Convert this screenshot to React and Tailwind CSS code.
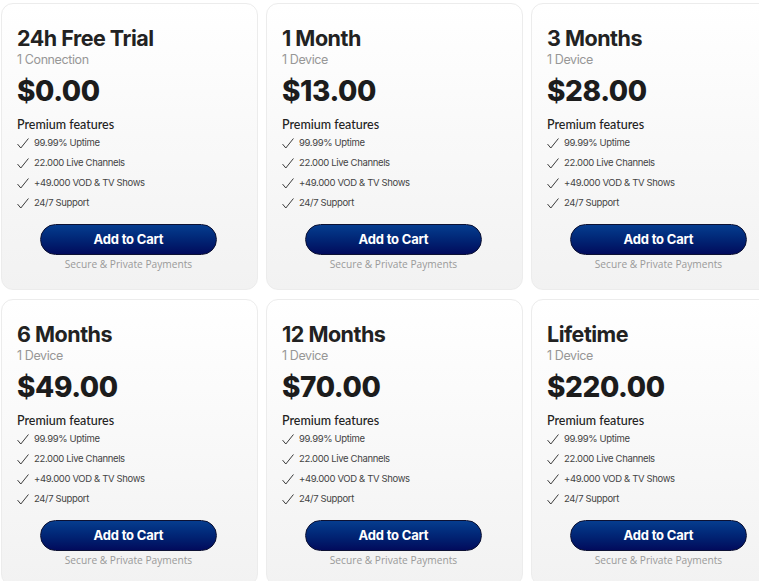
import React from "react";

const plans = [
  { title: "24h Free Trial", sub: "1 Connection", price: "$0.00" },
  { title: "1 Month", sub: "1 Device", price: "$13.00" },
  { title: "3 Months", sub: "1 Device", price: "$28.00" },
  { title: "6 Months", sub: "1 Device", price: "$49.00" },
  { title: "12 Months", sub: "1 Device", price: "$70.00" },
  { title: "Lifetime", sub: "1 Device", price: "$220.00" },
];

const features = ["99.99% Uptime", "22.000 Live Channels", "+49.000 VOD & TV Shows", "24/7 Support"];

function Check() {
  return (
    <svg width="12" height="11" viewBox="0 0 12 11" fill="none" className="shrink-0">
      <path d="M0.8 6.4 L3.8 10 L11.2 0.8" stroke="#3a3a3a" strokeWidth="1" strokeLinecap="round" strokeLinejoin="round" />
    </svg>
  );
}

function PlanCard({ plan }) {
  return (
    <div className="w-[257px] h-[287px] shrink-0 rounded-[12px] border border-[#ececec] bg-gradient-to-b from-white to-[#f2f2f2] px-[15px] pt-5 flex flex-col">
      <h2 className="text-[21.5px] leading-[28px] font-bold tracking-[-0.5px] text-[#222]">{plan.title}</h2>
      <div className="text-[12.5px] leading-4 text-[#979797] tracking-[-0.4px]">{plan.sub}</div>
      <div className="mt-[6px] text-[28px] leading-[34px] font-extrabold tracking-[-0.4px] text-[#1c1c1c]">{plan.price}</div>
      <div className="mt-[9px] text-[12.5px] leading-4 font-medium text-[#222] font-['Lato',sans-serif]">Premium features</div>
      <ul className="flex flex-col">
        {features.map((f) => (
          <li key={f} className="h-5 flex items-center gap-[5px] text-[9.5px] text-[#444] tracking-[-0.35px]">
            <Check />
            <span>{f}</span>
          </li>
        ))}
      </ul>
      <button className="mt-[11px] self-center ml-[-2px] w-[177px] h-[31px] rounded-full border border-[#0c1133] bg-gradient-to-b from-[#063d8f] to-[#020a5c] text-white text-[13px] font-bold tracking-[-0.2px]">
        Add to Cart
      </button>
      <div className="mt-[2px] self-center ml-[-2px] text-[10.2px] leading-[14px] text-[#9a9a9a] font-['Open_Sans',sans-serif]">
        Secure &amp; Private Payments
      </div>
    </div>
  );
}

export default function App() {
  return (
    <div className="w-[759px] h-[581px] overflow-hidden bg-white font-['Inter',sans-serif] pl-[1px] pt-[3px]">
      <div className="grid grid-cols-[257px_257px_257px] gap-x-2 gap-y-[9px]">
        {plans.map((p) => (
          <PlanCard key={p.title} plan={p} />
        ))}
      </div>
    </div>
  );
}
